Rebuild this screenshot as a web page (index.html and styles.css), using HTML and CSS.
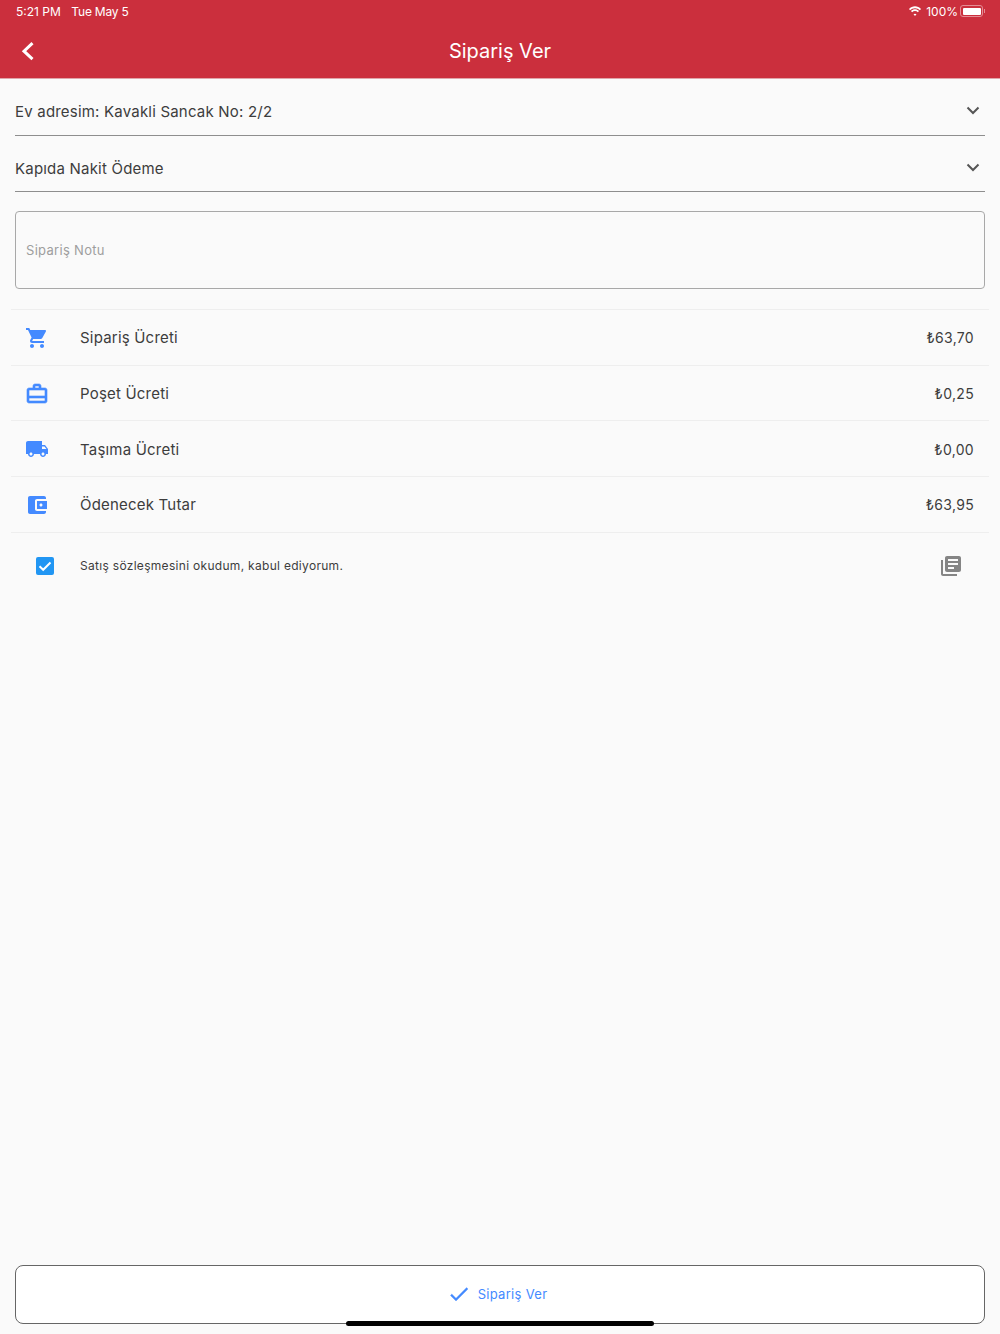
FILE: index.html
```html
<!DOCTYPE html>
<html>

<head>
  <meta charset="utf-8">
  <meta name="viewport" content="width=device-width, initial-scale=1">
  <title>Sipariş Ver</title>
  <link rel="stylesheet" href="styles.css">
</head>

<body>
  <div class="page">
    <header class="topbar">
      <div class="status">
        <span class="time">5:21 PM</span>
        <span class="date">Tue May 5</span>
        <span class="status-right">
          <svg class="wifi" viewBox="0 0 14 10"><path d="M7 2.2c1.9 0 3.6.7 4.9 2L13 3C11.4 1.300 9.300.3 7 .3S2.600 1.300 1 3l1.100 1.200C3.400 2.900 5.100 2.200 7 2.200zM7 5c1.100 0 2.100.4 2.900 1.200L11 5C9.900 3.900 8.500 3.300 7 3.300S4.100 3.900 3 5l1.100 1.200C4.900 5.400 5.900 5 7 5zm0 2.700c-.6 0-1.100.2-1.500.6L7 9.900l1.500-1.600c-.4-.4-.9-.6-1.500-.6z" fill="#fff"/></svg>
          <span>100%</span>
          <span class="battery"><span class="battery-fill"></span></span>
          <span class="battery-tip"></span>
        </span>
      </div>
      <div class="appbar">
        <svg class="back" viewBox="0 0 14 20"><path d="M12.500 2.200 4 10.200l8.500 8" fill="none" stroke="#fff" stroke-width="3"/></svg>
        <h1>Sipariş Ver</h1>
      </div>
    </header>

    <main class="content">
      <div class="select">
        <span>Ev adresim: Kavakli Sancak No: 2/2</span>
        <svg class="chevron" viewBox="0 0 14 9"><path d="M1.500 1.500 7 7l5.500-5.500" fill="none" stroke="#555" stroke-width="2"/></svg>
      </div>
      <div class="select">
        <span>Kapıda Nakit Ödeme</span>
        <svg class="chevron" viewBox="0 0 14 9"><path d="M1.500 1.500 7 7l5.500-5.500" fill="none" stroke="#555" stroke-width="2"/></svg>
      </div>

      <div class="note">Sipariş Notu</div>

      <ul class="prices">
        <li class="price-row">
          <svg class="icon" viewBox="0 0 24 24"><path d="M7 18c-1.100 0-2 .9-2 2s.9 2 2 2 2-.9 2-2-.9-2-2-2zM1 2v2h2l3.600 7.600L5.250 14c-.16.28-.25.61-.25 1 0 1.100.9 2 2 2h12v-2H7.420c-.14 0-.25-.11-.25-.25l.03-.12.9-1.630h7.450c.75 0 1.410-.41 1.750-1.030l3.580-6.490c.08-.14.12-.31.12-.48 0-.55-.45-1-1-1H5.210l-.94-2H1zm16 16c-1.100 0-2 .9-2 2s.9 2 2 2 2-.9 2-2-.9-2-2-2z"/></svg>
          <span class="label">Sipariş Ücreti</span>
          <span class="amount">₺63,70</span>
        </li>
        <li class="price-row">
          <svg class="icon icon-heavy" viewBox="0 0 24 24"><path d="M20 6h-4V4c0-1.100-.9-2-2-2h-4c-1.100 0-2 .9-2 2v2H4c-1.100 0-2 .9-2 2v11c0 1.100.9 2 2 2h16c1.100 0 2-.9 2-2V8c0-1.100-.9-2-2-2zM10 4h4v2h-4V4zm10 15H4v-3h16v3zm0-5H4V8h16v6z"/></svg>
          <span class="label">Poşet Ücreti</span>
          <span class="amount">₺0,25</span>
        </li>
        <li class="price-row">
          <svg class="icon" viewBox="0 0 24 24"><path d="M20 8h-3V4H3c-1.100 0-2 .9-2 2v11h2c0 1.660 1.340 3 3 3s3-1.340 3-3h6c0 1.660 1.340 3 3 3s3-1.340 3-3h2v-5l-3-4zM6 18.500c-.83 0-1.500-.67-1.500-1.500s.67-1.500 1.500-1.500 1.500.67 1.500 1.500-.67 1.500-1.500 1.500zm13.500-9 1.960 2.500H17V9.500h2.500zm-1.500 9c-.83 0-1.500-.67-1.500-1.500s.67-1.500 1.500-1.500 1.500.67 1.500 1.500-.67 1.500-1.500 1.500z"/></svg>
          <span class="label">Taşıma Ücreti</span>
          <span class="amount">₺0,00</span>
        </li>
        <li class="price-row">
          <svg class="icon" viewBox="0 0 24 24"><path d="M21 18v1c0 1.100-.9 2-2 2H5c-1.110 0-2-.9-2-2V5c0-1.100.89-2 2-2h14c1.100 0 2 .9 2 2v1h-9c-1.110 0-2 .9-2 2v8c0 1.100.89 2 2 2h9zm-9-2h10V8H12v8zm4-2.500c-.83 0-1.500-.67-1.500-1.500s.67-1.500 1.500-1.500 1.500.67 1.500 1.500-.67 1.500-1.500 1.500z"/></svg>
          <span class="label">Ödenecek Tutar</span>
          <span class="amount">₺63,95</span>
        </li>
      </ul>

      <div class="agree">
        <span class="checkbox">
          <svg viewBox="0 0 18 18"><path d="M3.500 9.200 7.200 12.800 14.500 5.500" fill="none" stroke="#fff" stroke-width="2"/></svg>
        </span>
        <span class="agree-text">Satış sözleşmesini okudum, kabul ediyorum.</span>
        <svg class="doc" viewBox="0 0 24 24"><path d="M4 6H2v14c0 1.100.9 2 2 2h14v-2H4V6zm16-4H8c-1.100 0-2 .9-2 2v12c0 1.100.9 2 2 2h12c1.100 0 2-.9 2-2V4c0-1.100-.9-2-2-2zm-1 9H9V9h10v2zm-4 4H9v-2h6v2zm4-8H9V5h10v2z"/></svg>
      </div>

      <button type="button" class="submit">
        <svg class="tick" viewBox="0 0 24 24"><path d="M9 16.170 4.830 12l-1.420 1.410L9 19 21 7l-1.410-1.410z"/></svg>
        <span>Sipariş Ver</span>
      </button>
    </main>

    <div class="home-bar"></div>
  </div>
</body>

</html>
```

FILE: styles.css
```css
* {
  box-sizing: border-box;
}

body {
  margin: 0;
  background-color: #fafafa;
  font-family: "Inter", "Liberation Sans", sans-serif;
  color: #3d3d3d;
}

.page {
  position: relative;
  display: flex;
  flex-direction: column;
  height: 1334px;
  overflow: hidden;
}

.topbar {
  height: 79px;
  flex-shrink: 0;
  background-color: #cb2f3d;
  border-bottom: 1px solid #e0a5aa;
  color: #fff;
}

.status {
  display: flex;
  align-items: center;
  height: 24px;
  padding: 0 15px 2px 16px;
  font-size: 12px;
}

.date {
  margin-left: 10.500px;
  letter-spacing: -0.2px;
}

.status-right {
  display: flex;
  align-items: center;
  margin-left: auto;
}

.wifi {
  width: 14px;
  height: 10px;
  margin-right: 4px;
}

.battery {
  display: flex;
  width: 23px;
  height: 12px;
  margin-left: 2px;
  padding: 1.500px;
  border: 1px solid #e48d95;
  border-radius: 3px;
}

.battery-fill {
  flex: 1;
  background-color: #fff;
  border-radius: 1px;
}

.battery-tip {
  width: 1px;
  height: 4px;
  margin-left: 1px;
  background-color: #e48d95;
}

.appbar {
  position: relative;
  display: flex;
  align-items: center;
  justify-content: center;
  height: 54px;
}

.appbar h1 {
  margin: 0;
  font-size: 20px;
  font-weight: 400;
}

.back {
  position: absolute;
  left: 20px;
  top: 17px;
  width: 14px;
  height: 20px;
}

.content {
  display: flex;
  flex-direction: column;
  flex: 1;
  padding: 0 15px 10px;
}

.select {
  display: flex;
  align-items: center;
  justify-content: space-between;
  height: 56.500px;
  padding: 10px 5px 0 0;
  border-bottom: 1px solid #8e8e8e;
  font-size: 15px;
  letter-spacing: 0.2px;
}

.chevron {
  width: 14px;
  height: 9px;
  margin-bottom: 2px;
}

.note {
  display: flex;
  align-items: center;
  height: 78px;
  margin-top: 19px;
  padding: 0 0 1px 10px;
  border: 1px solid #a8a8a8;
  border-radius: 4px;
  color: #9e9e9e;
  font-size: 13px;
  letter-spacing: 0.3px;
}

.prices {
  margin: 20px -4px 0;
  padding: 0;
  list-style: none;
  border-top: 1px solid #eee;
}

.price-row {
  display: flex;
  align-items: center;
  height: 55.700px;
  padding: 1px 15px 0 14px;
  border-bottom: 1px solid #eee;
}

.icon {
  width: 24px;
  height: 24px;
  fill: #448aff;
}

.icon-heavy {
  stroke: #448aff;
  stroke-width: 0.6;
}

.label {
  margin-left: 31px;
  font-size: 15px;
  letter-spacing: 0.2px;
}

.amount {
  margin-left: auto;
  font-size: 14px;
  letter-spacing: 0.3px;
}

.agree {
  display: flex;
  align-items: center;
  height: 66px;
  padding-right: 22px;
}

.checkbox {
  display: flex;
  width: 18px;
  height: 18px;
  margin-left: 21px;
  background-color: #2196f3;
  border-radius: 2px;
}

.agree-text {
  margin-left: 26px;
  font-size: 12px;
  letter-spacing: 0.3px;
}

.doc {
  width: 24px;
  height: 24px;
  margin-left: auto;
  fill: #858585;
}

.submit {
  display: flex;
  align-items: center;
  justify-content: center;
  gap: 7px;
  height: 58.500px;
  margin: auto 0 0.500px;
  padding: 0 6px 0 0;
  background-color: #fff;
  border: 1.500px solid #666;
  border-radius: 8px;
  color: #448aff;
  font-family: inherit;
  font-size: 13px;
  letter-spacing: 0.3px;
}

.tick {
  width: 24px;
  height: 24px;
  fill: #448aff;
  stroke: #448aff;
  stroke-width: 0.3;
}

.home-bar {
  position: absolute;
  left: 346px;
  top: 1321px;
  width: 308px;
  height: 5px;
  background-color: #000;
  border-radius: 3px;
}
```
